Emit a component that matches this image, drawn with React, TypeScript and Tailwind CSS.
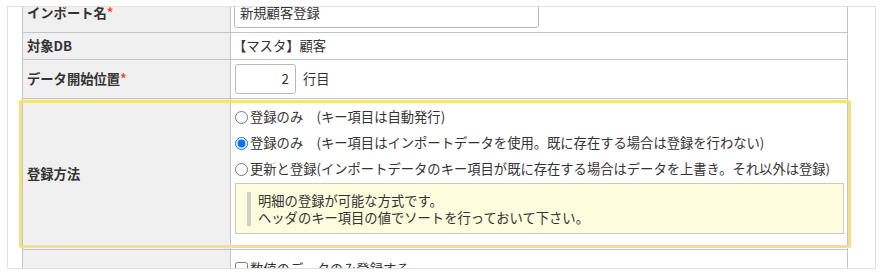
import React from "react";

const Star = () => <span className="text-[#e8552b]">*</span>;

export default function App() {
  return (
    <div className="w-[883px] h-[272px] bg-white overflow-hidden font-['Noto_Sans_CJK_JP','Noto_Sans',sans-serif] text-[13.3px] text-[#333]">
      <div className="ml-[7px] mt-[6px] w-[869px] h-[263px] border border-[#e2e2e2] overflow-hidden">
        <div className="-mt-[14px] ml-[14px] w-[826px] border-x border-[#c4c4c4]">
          {/* row 1 */}
          <div className="flex h-[40px] border-b border-[#c4c4c4]">
            <div className="w-[208px] shrink-0 bg-[#f0f0f0] border-r border-[#c4c4c4] flex items-center pl-[4px] font-bold">
              インポート名<Star />
            </div>
            <div className="flex-1 flex items-center pl-[3px]">
              <div className="w-[305px] h-[30px] border border-[#b8b8b8] rounded-[3px] flex items-center pl-[5px] leading-none">
                新規顧客登録
              </div>
            </div>
          </div>
          {/* row 2 */}
          <div className="flex h-[27px] border-b border-[#c4c4c4]">
            <div className="w-[208px] shrink-0 bg-[#f0f0f0] border-r border-[#c4c4c4] flex items-center pl-[4px] font-bold">
              対象DB
            </div>
            <div className="flex-1 flex items-center pl-[2px]">【マスタ】顧客</div>
          </div>
          {/* row 3 */}
          <div className="flex h-[39px] border-b border-[#c4c4c4]">
            <div className="w-[208px] shrink-0 bg-[#f0f0f0] border-r border-[#c4c4c4] flex items-center pl-[4px] font-bold">
              データ開始位置<Star />
            </div>
            <div className="flex-1 flex items-center pl-[4px]">
              <div className="w-[61px] h-[30px] border border-[#b8b8b8] rounded-[3px] flex items-center justify-end pr-[6px] leading-none">
                2
              </div>
              <span className="ml-[7px]">行目</span>
            </div>
          </div>
          {/* row 4 highlighted */}
          <div className="relative flex h-[151px] border-b border-[#c4c4c4]">
            <div className="w-[208px] shrink-0 bg-[#f0f0f0] border-r border-[#c4c4c4] flex items-center pl-[4px] font-bold">
              登録方法
            </div>
            <div className="flex-1 flex flex-col pl-[4px] pr-[3px] pt-[5px]">
              <label className="flex items-center h-[26px] whitespace-nowrap">
                <input type="radio" name="m" className="m-0 mr-[2px] w-[13px] h-[13px]" readOnly />
                登録のみ　(キー項目は自動発行)
              </label>
              <label className="flex items-center h-[26px] whitespace-nowrap">
                <input type="radio" name="m" defaultChecked className="m-0 mr-[2px] w-[13px] h-[13px]" />
                登録のみ　(キー項目はインポートデータを使用。既に存在する場合は登録を行わない)
              </label>
              <label className="flex items-center h-[26px] whitespace-nowrap">
                <input type="radio" name="m" className="m-0 mr-[2px] w-[13px] h-[13px]" readOnly />
                更新と登録(インポートデータのキー項目が既に存在する場合はデータを上書き。それ以外は登録)
              </label>
              <div className="mt-[1px] border border-[#c8c8c8] bg-[#fdfcdc] pl-[11px] pt-[8px] pb-[7px]">
                <div className="border-l-4 border-[#cfcfcf] pl-[7px] leading-[17px]">
                  <div>明細の登録が可能な方式です。</div>
                  <div>ヘッダのキー項目の値でソートを行っておいて下さい。</div>
                </div>
              </div>
            </div>
            <div className="absolute -left-[4px] -right-[4px] top-[1px] bottom-[1px] border-[3px] border-[#f6e27a] rounded-[2px] pointer-events-none" />
          </div>
          {/* row 5 */}
          <div className="flex h-[40px]">
            <div className="w-[208px] shrink-0 bg-[#f0f0f0] border-r border-[#c4c4c4]" />
            <div className="flex-1 flex items-start pl-[4px] pt-[10px]">
              <label className="flex items-center h-[17px] whitespace-nowrap">
                <input type="checkbox" className="m-0 mr-[2px] w-[13px] h-[13px]" readOnly />
                数値のデータのみ登録する
              </label>
            </div>
          </div>
        </div>
      </div>
    </div>
  );
}
